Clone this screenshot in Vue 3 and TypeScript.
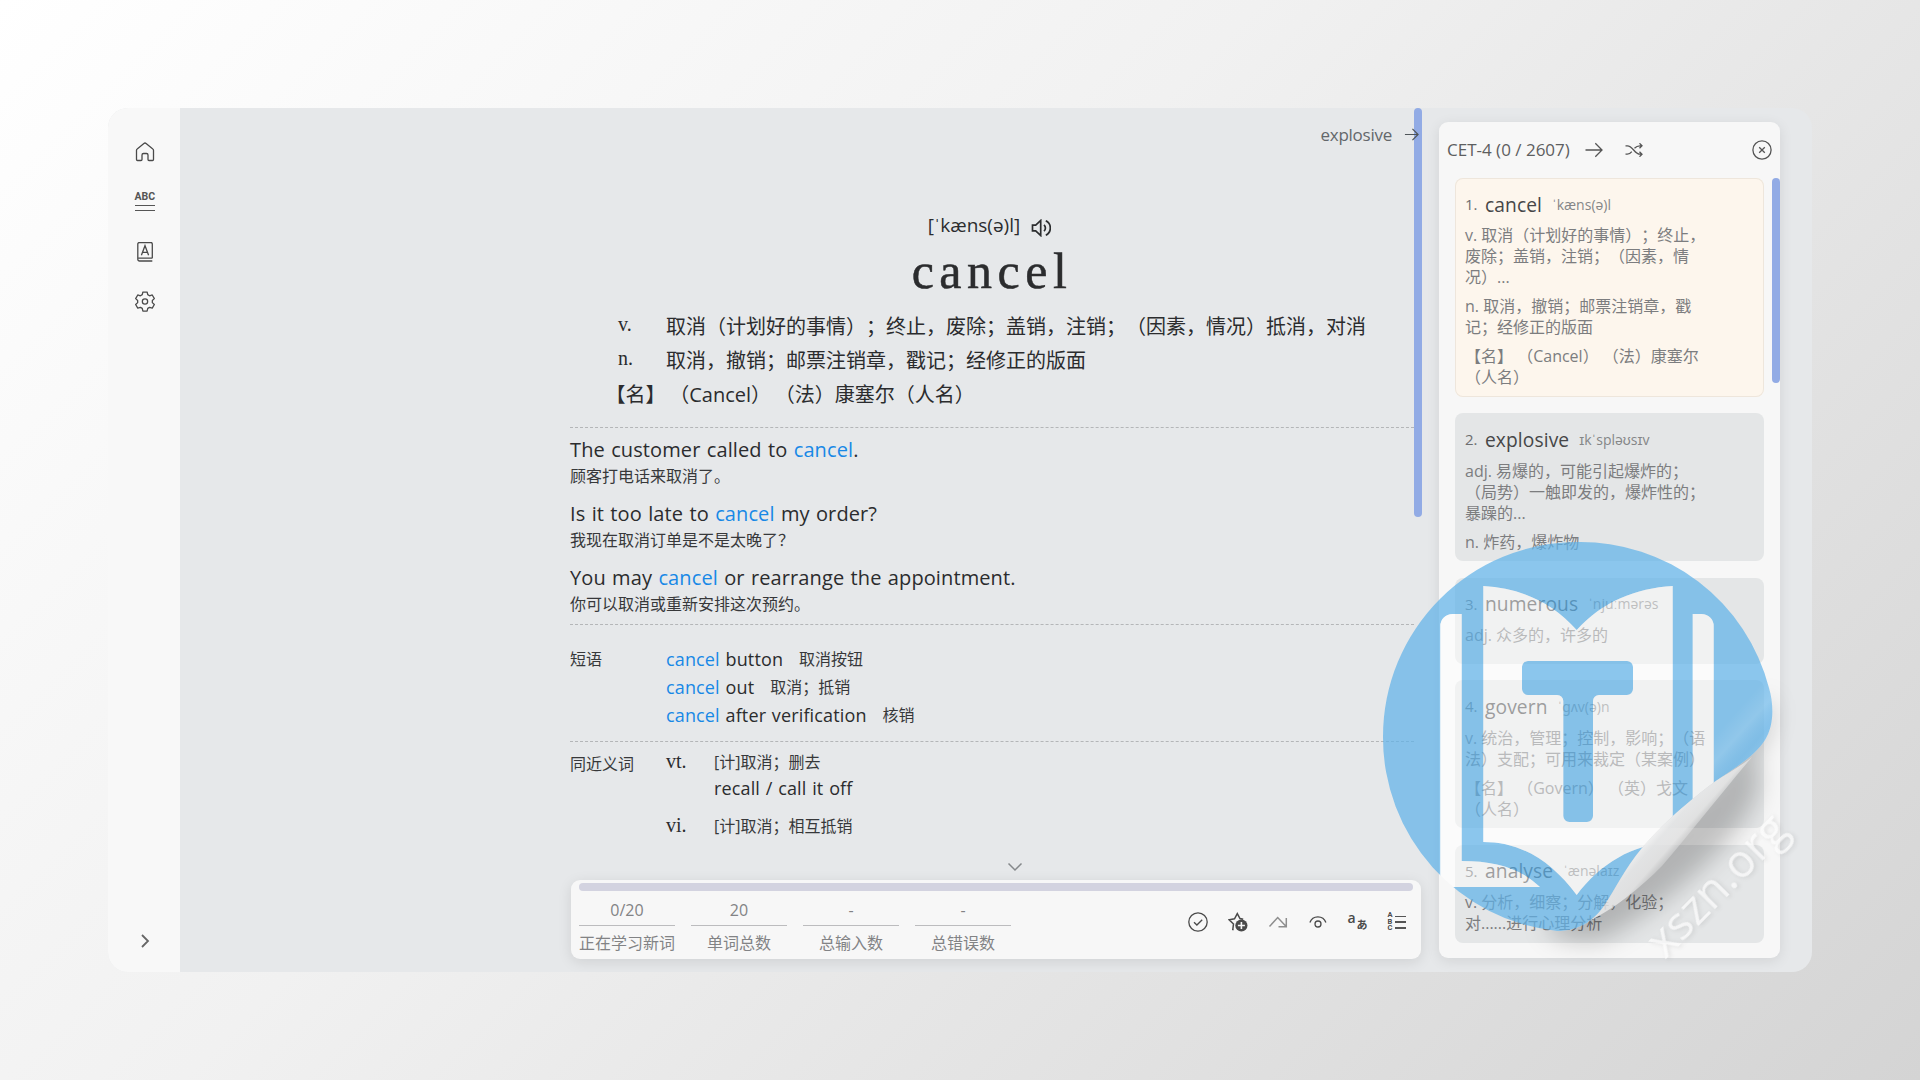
<script setup lang="ts">
interface Definition { pos: string; text: string }
interface Sentence { before: string; after: string; cn: string }
interface Phrase { rest: string; cn: string }
interface WordCard { word: string; ipa: string; lines: string[][]; active?: boolean }
interface Stat { value: string; label: string }

const definitions: Definition[] = [
  { pos: 'v.', text: '取消（计划好的事情）；终止，废除；盖销，注销；（因素，情况）抵消，对消' },
  { pos: 'n.', text: '取消，撤销；邮票注销章，戳记；经修正的版面' },
]

const sentences: Sentence[] = [
  { before: 'The customer called to ', after: '.', cn: '顾客打电话来取消了。' },
  { before: 'Is it too late to ', after: ' my order?', cn: '我现在取消订单是不是太晚了？' },
  { before: 'You may ', after: ' or rearrange the appointment.', cn: '你可以取消或重新安排这次预约。' },
]

const phrases: Phrase[] = [
  { rest: ' button', cn: '取消按钮' },
  { rest: ' out', cn: '取消；抵销' },
  { rest: ' after verification', cn: '核销' },
]

const stats: Stat[] = [
  { value: '0/20', label: '正在学习新词' },
  { value: '20', label: '单词总数' },
  { value: '-', label: '总输入数' },
  { value: '-', label: '总错误数' },
]

const cards: WordCard[] = [
  {
    word: 'cancel', ipa: 'ˈkæns(ə)l', active: true,
    lines: [
      ['v. 取消（计划好的事情）；终止，', '废除；盖销，注销；（因素，情', '况）...'],
      ['n. 取消，撤销；邮票注销章，戳', '记；经修正的版面'],
      ['【名】 （Cancel） （法）康塞尔', '（人名）'],
    ],
  },
  {
    word: 'explosive', ipa: 'ɪkˈspləʊsɪv',
    lines: [['adj. 易爆的，可能引起爆炸的；', '（局势）一触即发的，爆炸性的；', '暴躁的...'], ['n. 炸药，爆炸物']],
  },
  { word: 'numerous', ipa: 'ˈnjuːmərəs', lines: [['adj. 众多的，许多的']] },
  {
    word: 'govern', ipa: 'ˈɡʌv(ə)n',
    lines: [['v. 统治，管理；控制，影响；（语', '法）支配；可用来裁定（某案例）'], ['【名】 （Govern） （英）戈文', '（人名）']],
  },
  { word: 'analyse', ipa: 'ˈænəlaɪz', lines: [['v. 分析，细察；分解，化验；', '对......进行心理分析']] },
]
</script>

<template>
  <div class="desktop">
    <div class="window">
      <nav class="sidebar">
        <svg class="ico" viewBox="0 0 20 20"><path d="M8.9 1.5 2.2 7A1.5 1.5 0 0 0 1.500 8.200V17.500a1 1 0 0 0 1 1H6a1 1 0 0 0 1-1V13a1.500 1.500 0 0 1 1.500-1.500h3A1.500 1.500 0 0 1 13 13v4.500a1 1 0 0 0 1 1h3.500a1 1 0 0 0 1-1V8.200a1.500 1.500 0 0 0-.7-1.200L11.100 1.500a1.700 1.700 0 0 0-2.200 0Z" /></svg>
        <div class="abc"><span>ABC</span><i></i><i></i></div>
        <svg class="ico" viewBox="0 0 20 20"><path d="M17.300 16.200H3.500M17.300 19H4.500A1.700 1.700 0 0 1 2.800 17.300V2A1.500 1.500 0 0 1 4.300.5H15.800A1.500 1.500 0 0 1 17.300 2v14.200M6.400 13.300 10 3.700l3.600 9.600M7.500 10.300h5" /></svg>
        <svg class="ico gear" viewBox="0 0 24 24"><path d="M9.700 2.200h4.600l.7 2.900 2 1.200 2.900-.9 2.300 4-2.200 2v2.400l2.200 2-2.300 4-2.900-.9-2 1.200-.7 2.900H9.700L9 20.100l-2-1.200-2.900.9-2.300-4 2.200-2v-2.400l-2.200-2 2.300-4 2.900.9 2-1.200Z" stroke-linejoin="round" /><circle cx="12" cy="12.600" r="2.900" /></svg>
        <svg class="expand" viewBox="0 0 10 16"><path d="m2 2 6 6-6 6" /></svg>
      </nav>

      <main class="stage">
        <div class="column">
          <div class="next">
            <span>explosive</span>
            <svg viewBox="0 0 16 16"><path d="M1 8h14M9 2l6 6-6 6" /></svg>
          </div>
          <div class="ipa">
            <span>[ˈkæns(ə)l]</span>
            <svg viewBox="0 0 20 18"><path d="M1.500 6.200v5.600h3.200l5 4.700V1.500l-5 4.700ZM13 5.800a4.300 4.300 0 0 1 0 6.400M14.800 1.800a8 8 0 0 1 0 14.400" /></svg>
          </div>
          <h1>cancel</h1>
          <section class="defs">
            <div v-for="d in definitions" :key="d.pos" class="def">
              <span class="pos">{{ d.pos }}</span><span>{{ d.text }}</span>
            </div>
            <div class="def name">【名】 （Cancel） （法）康塞尔（人名）</div>
          </section>
          <section class="sentences">
            <div v-for="s in sentences" :key="s.cn" class="sentence">
              <p class="en">{{ s.before }}<b>cancel</b>{{ s.after }}</p>
              <p class="cn">{{ s.cn }}</p>
            </div>
          </section>
          <section class="phrases">
            <span class="label">短语</span>
            <div>
              <p v-for="p in phrases" :key="p.cn"><span class="ph"><b>cancel</b>{{ p.rest }}</span><span class="cn">{{ p.cn }}</span></p>
            </div>
          </section>
          <section class="synonyms">
            <span class="label">同近义词</span>
            <div>
              <div class="syn">
                <span class="pos">vt.</span>
                <div><p class="cn">[计]取消；删去</p><p class="ph">recall / call it off</p></div>
              </div>
              <div class="syn">
                <span class="pos">vi.</span>
                <div><p class="cn">[计]取消；相互抵销</p></div>
              </div>
            </div>
          </section>
          <div class="fold"><svg viewBox="0 0 16 10"><path d="m1.500 1.500 6.500 6.500 6.500-6.500" /></svg></div>
          <footer class="toolbar">
            <div class="progress"></div>
            <div class="tools">
              <div class="stats">
                <div v-for="s in stats" :key="s.label" class="stat">
                  <span>{{ s.value }}</span><span>{{ s.label }}</span>
                </div>
              </div>
              <div class="actions">
                <svg viewBox="0 0 20 20"><circle cx="10" cy="10" r="9.200" /><path d="m6 10.200 2.900 2.800 5.300-5.300" /></svg>
                <svg viewBox="0 0 20 20"><path d="M5.600 17.800 4.800 17.500l.700-5.500L1.200 7.800l5.300-1L9.300 1.600 12 6.500l3.200.7" stroke-width="1.500" /><circle cx="13.400" cy="13.500" r="6.100" class="fill" /><path d="M13.400 10v7M9.900 13.500h7" class="plus" /></svg>
                <svg viewBox="0 0 20 20" class="dim"><path d="M1.500 14.500 9.700 5.500l8 8.500M10.500 14.800h7.800V6" /></svg>
                <svg viewBox="0 0 20 20" stroke-width="1.600"><path d="M1.900 10.500a8.500 8.500 0 0 1 16 0" /><circle cx="10" cy="12" r="3" /></svg>
                <div class="trans"><span>a</span><span>あ</span></div>
                <div class="abclist"><div><span>A</span><span>B</span><span>C</span></div><div class="rules"><i></i><i></i><i></i></div></div>
              </div>
            </div>
          </footer>
        </div>
        <div class="thumb main-thumb"></div>
      </main>

      <aside class="panel">
        <header>
          <span class="title">CET-4 (0 / 2607)</span>
          <svg viewBox="0 0 18 16" class="arrow"><path d="M.5 8h16.500M10.300 1.300 17 8l-6.700 6.700" /></svg>
          <svg viewBox="0 0 18 14" class="shuffle"><path d="M.5 2.800h1.800c5.700 0 7 8.400 12.700 8.400h2M.5 11.200h1.800c2 0 3.400-1.200 4.500-2.600M9.500 5.200C10.800 3.800 12.500 2.800 15 2.800h2M14.500.3 17 2.800l-2.500 2.500M14.500 8.700l2.500 2.500-2.500 2.500" /></svg>
          <svg viewBox="0 0 20 20" class="close"><circle cx="10" cy="10" r="9.100" /><path d="m7.200 7.200 5.600 5.600M12.800 7.200l-5.600 5.600" /></svg>
        </header>
        <div class="cards">
          <article v-for="(c, i) in cards" :key="c.word" class="card" :class="{ active: c.active }">
            <div class="head"><span class="idx">{{ i + 1 }}.</span><span class="word">{{ c.word }}</span><span class="sound">{{ c.ipa }}</span></div>
            <p v-for="(group, g) in c.lines" :key="g"><span v-for="line in group" :key="line">{{ line }}</span></p>
          </article>
        </div>
        <div class="thumb list-thumb"></div>
      </aside>
    </div>

    <svg class="badge" viewBox="1370 530 450 450">
      <defs>
        <clipPath id="disc">
          <path d="M1577.500 542A194.500 194.500 0 0 0 1383 736.500 194.500 194.500 0 0 0 1557 931C1578 931 1594 921 1604 906C1616 888 1624 870 1642 848C1660 827 1680 808 1713 783C1736 767 1754 757 1765 740C1774 726 1774 705 1769 688A194.500 194.500 0 0 0 1577.500 542Z" />
        </clipPath>
        <linearGradient id="curl" gradientUnits="userSpaceOnUse" x1="1652" y1="828" x2="1684" y2="856">
          <stop offset="0" stop-color="#fff" stop-opacity=".8" />
          <stop offset=".3" stop-color="#e9eaeb" stop-opacity=".85" />
          <stop offset=".6" stop-color="#f2f2f2" stop-opacity=".7" />
          <stop offset="1" stop-color="#d0d1d2" stop-opacity="0" />
        </linearGradient>
        <linearGradient id="bend" gradientUnits="userSpaceOnUse" x1="1715" y1="735" x2="1752" y2="768">
          <stop offset="0" stop-color="#fff" stop-opacity="0" />
          <stop offset=".35" stop-color="#fff" stop-opacity=".1" />
          <stop offset=".7" stop-color="#2a80c4" stop-opacity=".06" />
          <stop offset="1" stop-color="#fff" stop-opacity=".06" />
        </linearGradient>
        <filter id="soft" x="-30%" y="-30%" width="160%" height="160%"><feGaussianBlur stdDeviation="12" /></filter>
        <clipPath id="outside">
          <path clip-rule="evenodd" d="M1370 530H1820V980H1370ZM1577.500 542A194.500 194.500 0 0 0 1383 736.500 194.500 194.500 0 0 0 1557 931C1578 931 1594 921 1604 906C1616 888 1624 870 1642 848C1660 827 1680 808 1713 783C1736 767 1754 757 1765 740C1774 726 1774 705 1769 688A194.500 194.500 0 0 0 1577.500 542Z" />
        </clipPath>
      </defs>
      <g clip-path="url(#outside)">
        <path d="M1768 695C1776 725 1766 745 1750 758C1768 772 1758 806 1730 838C1700 872 1660 908 1606 938C1584 945 1550 938 1545 925L1640 840L1713 783Z" fill="#000" fill-opacity=".22" filter="url(#soft)" />
      </g>
      <g clip-path="url(#disc)">
        <path fill="#5fb2e8" fill-opacity=".71" fill-rule="evenodd" d="M1370 530H1820V980H1370Z
          M1461.700 614V861C1495 861 1520 868 1540 887H1440.300V626A12 12 0 0 1 1452.300 614Z
          M1483.300 586C1520 588 1552 602 1576.700 630C1602 602 1636 588 1672.700 586V842C1632 844 1600 864 1576.700 895C1552 862 1522 842 1483.300 842Z
          M1692.700 614H1701.700A12 12 0 0 1 1713.700 626V980H1692.700Z
          M1528 661H1627A6 6 0 0 1 1633 667V689A6 6 0 0 1 1627 695H1599A6 6 0 0 0 1593 701V816A6 6 0 0 1 1587 822H1569.300A6 6 0 0 1 1563.300 816V701A6 6 0 0 0 1557.300 695H1528A6 6 0 0 1 1522 689V667A6 6 0 0 1 1528 661Z" />
        <path fill="#fff" fill-opacity=".47" fill-rule="evenodd" d="M1461.700 614V861C1495 861 1520 868 1540 887H1440.300V626A12 12 0 0 1 1452.300 614Z
          M1483.300 586C1520 588 1552 602 1576.700 630C1602 602 1636 588 1672.700 586V842C1632 844 1600 864 1576.700 895C1552 862 1522 842 1483.300 842Z
          M1692.700 614H1701.700A12 12 0 0 1 1713.700 626V980H1692.700Z
          M1528 661H1627A6 6 0 0 1 1633 667V689A6 6 0 0 1 1627 695H1599A6 6 0 0 0 1593 701V816A6 6 0 0 1 1587 822H1569.300A6 6 0 0 1 1563.300 816V701A6 6 0 0 0 1557.300 695H1528A6 6 0 0 1 1522 689V667A6 6 0 0 1 1528 661Z" />
        <path fill="url(#bend)" d="M1713.700 650H1790V800H1713.700Z" />
      </g>
      <path d="M1752 757C1740 767 1724 775 1713 783C1680 808 1660 827 1642 848C1624 870 1616 888 1604 906C1598 914 1592 920 1584 924C1616 908 1640 888 1662 866C1686 838 1716 800 1752 757Z" fill="url(#curl)" />
      <text x="0" y="0" transform="translate(1665 960) rotate(-45.500)" class="site">xszn.org</text>
    </svg>
  </div>
</template>

<style>
html, body { margin: 0; overflow: hidden; }
</style>

<style scoped>
.desktop {
  position: relative;
  box-sizing: border-box;
  width: 1920px;
  height: 1080px;
  padding: 108px;
  background: linear-gradient(135deg, #ffffff 0%, #f1f1f1 42%, #d4d4d4 100%);
  font-family: "Open Sans", "Noto Sans CJK SC", sans-serif;
  text-spacing-trim: space-all;
  color: #2b2c2e;
  overflow: hidden;
}
p, h1 { margin: 0; }
b { font-weight: 400; color: #1888e6; }
svg { fill: none; stroke: #4a4a4a; stroke-width: 1.3; flex: none; }
.window {
  display: flex;
  width: 1704px;
  height: 864px;
  border-radius: 20px;
  background: #e6e8ea;
  overflow: hidden;
}
.sidebar {
  box-sizing: border-box;
  width: 72px;
  padding-top: 34px;
  padding-left: 1px;
  background: #f8f8f8;
  display: flex;
  flex-direction: column;
  align-items: center;
  gap: 29px;
}
.ico { width: 20px; height: 20px; }
.gear { width: 22px; height: 22px; margin-top: -1px; stroke-width: 1.400; }
.abc { width: 20px; height: 20px; margin: 1px 0; display: flex; flex-direction: column; gap: 4px; }
.abc span { font: 700 10.500px/10px Roboto, sans-serif; letter-spacing: 0; color: #555; height: 9px; }
.abc i { height: 1.200px; background: #555; flex: none; }
.expand { width: 10px; height: 16px; margin-top: auto; margin-bottom: 23px; }
.expand path { stroke: #666; stroke-width: 1.800; }

.stage { position: relative; width: 1242px; box-sizing: border-box; padding-left: 390px; flex: none; background: #e6e8ea; }
.column { display: flex; flex-direction: column; height: 100%; }
.next { display: flex; align-items: center; justify-content: flex-end; gap: 12px; height: 52px; padding-right: 3px; font-size: 17px; color: #63676a; }
.next span { letter-spacing: -.25px; }
.next svg { position: relative; z-index: 1; width: 15px; height: 15px; stroke: #4f5559; }
.ipa { display: flex; align-items: center; justify-content: center; gap: 11px; height: 30px; margin-top: 50px; font-size: 19px; padding-right: 13px; }
.ipa svg { width: 20px; height: 18px; stroke: #2b2c2e; stroke-width: 1.700; margin-top: 5px; }
h1 { font: 400 50px/58px "Liberation Serif", serif; letter-spacing: 5.500px; text-align: center; margin-top: 2px; padding-right: 8px; -webkit-text-stroke: .5px #2b2c2e; }
.defs { margin-top: 10px; padding: 0 0 15px; border-bottom: 1px dashed #b4b6b8; width: 844px; }
.def { display: flex; height: 34px; line-height: 34px; font-size: 20px; white-space: nowrap; padding-left: 48px; }
.def .pos { width: 48px; margin-top: -3px; }
.def.name { padding-left: 35.500px; word-spacing: -1.500px; }
.pos { font-family: "Liberation Serif", serif; font-size: 20px; }
.sentences { padding-top: 8px; border-bottom: 1px dashed #b4b6b8; width: 844px; height: 188px; }
.sentence { height: 64px; }
.en { font-size: 20px; line-height: 28px; white-space: nowrap; word-spacing: 1px; letter-spacing: .11px; }
.cn { font-size: 16px; color: #37383a; }
.sentence .cn { line-height: 24px; }
.phrases { display: flex; padding: 20px 0 12px; border-bottom: 1px dashed #b4b6b8; width: 844px; }
.label { width: 96px; font-size: 16px; line-height: 28px; color: #37383a; }
.phrases p { height: 28px; line-height: 28px; display: flex; gap: 16px; }
.ph { font-size: 18px; white-space: pre; word-spacing: .900px; letter-spacing: .14px; }
.synonyms { display: flex; padding-top: 8px; }
.syn { display: flex; margin-bottom: 13px; line-height: 25px; }
.syn .pos { width: 48px; margin-top: -1px; }
.syn .ph { line-height: 26px; }
.fold { margin-top: auto; padding-left: 38px; height: 26px; display: flex; align-items: center; justify-content: center; }
.fold svg { width: 16px; height: 10px; stroke: #85888b; stroke-width: 1.500; }
.toolbar { box-sizing: border-box; margin: 0 1px 13px; height: 79px; border-radius: 9px; background: #f7f7f7; padding: 3px 8px 0; box-shadow: 0 3px 14px rgba(0, 0, 0, .1); flex: none; }
.progress { height: 8px; border-radius: 4px; background: #d3d3e0; }
.tools { display: flex; justify-content: space-between; }
.stats { display: flex; gap: 16px; }
.stat { width: 96px; display: flex; flex-direction: column; text-align: center; font-size: 16px; color: #828385; }
.stat span:first-child { height: 34px; line-height: 38px; border-bottom: 1px solid #bcbcbe; }
.stat span:last-child { line-height: 35px; }
.actions { display: flex; gap: 20px; margin-top: 21px; padding-right: 5.500px; }
.actions svg { width: 20px; height: 20px; stroke-width: 1.300; }
.actions .dim { stroke: #8e8e8e; stroke-width: 1.500; }
.actions .fill { fill: #4a4a4a; stroke: none; }
.actions .plus { stroke: #f7f7f7; stroke-width: 1.600; }
.trans { display: flex; width: 20px; height: 20px; color: #4a4a4a; font-weight: 600; }
.trans span { font-size: 14px; line-height: 12px; width: 9px; }
.trans span:last-child { font-size: 11px; font-weight: 700; line-height: 25px; }
.abclist { width: 20px; height: 20px; display: flex; gap: 2px; color: #4a4a4a; }
.abclist span { display: block; font: 700 7.500px/6.600px Roboto, sans-serif; }
.rules { display: flex; flex-direction: column; gap: 4.600px; padding-top: 3.500px; }
.rules i { width: 11px; height: 1.300px; background: #555; }

.thumb { position: absolute; width: 8px; border-radius: 4px; background: #92abe5; }
.main-thumb { right: 0; top: 0; height: 409px; }
.list-thumb { right: 0; top: 56px; height: 205px; }

.panel { position: relative; box-sizing: border-box; margin: 14px 0 0 17px; width: 341px; height: 836px; border-radius: 9px; background: #f7f7f7; box-shadow: 0 3px 14px rgba(0, 0, 0, .09); flex: none; }
.panel header { display: flex; align-items: center; height: 56px; padding: 0 8px; }
.title { font-size: 17px; color: #5d5e60; width: 138px; white-space: nowrap; margin-top: -2px; }
.panel svg { stroke: #555; }
.arrow { width: 18px; height: 16px; margin-right: 22px; }
.shuffle { width: 18px; height: 14px; }
.close { width: 20px; height: 20px; margin-left: auto; }
.cards { display: flex; flex-direction: column; gap: 16.500px; padding: 0 16px; }
.card { box-sizing: border-box; min-height: 86px; border-radius: 8px; background: #e4e6e7; padding: 11px 0 .800px 10px; }
.card.active { background: #fdf6ed; box-shadow: inset 0 0 0 1px #eee6dc; }
.head { display: flex; align-items: center; height: 30px; margin-bottom: 6.200px; }
.idx { width: 20px; font-size: 15px; color: #6d6e70; }
.word { font-size: 19.200px; letter-spacing: .1px; color: #464648; }
.sound { font-size: 14px; color: #858688; margin-left: 10px; }
.card p { margin-bottom: 8px; font-size: 16px; line-height: 21px; color: #7c7d7f; }
.card p span { display: block; white-space: nowrap; }

.badge { position: absolute; left: 1370px; top: 530px; width: 450px; height: 450px; stroke: none; pointer-events: none; }
.site { font-size: 46px; fill: #fff; fill-opacity: .72; filter: drop-shadow(1px 2px 2px rgba(0, 0, 0, .13)); }
</style>
